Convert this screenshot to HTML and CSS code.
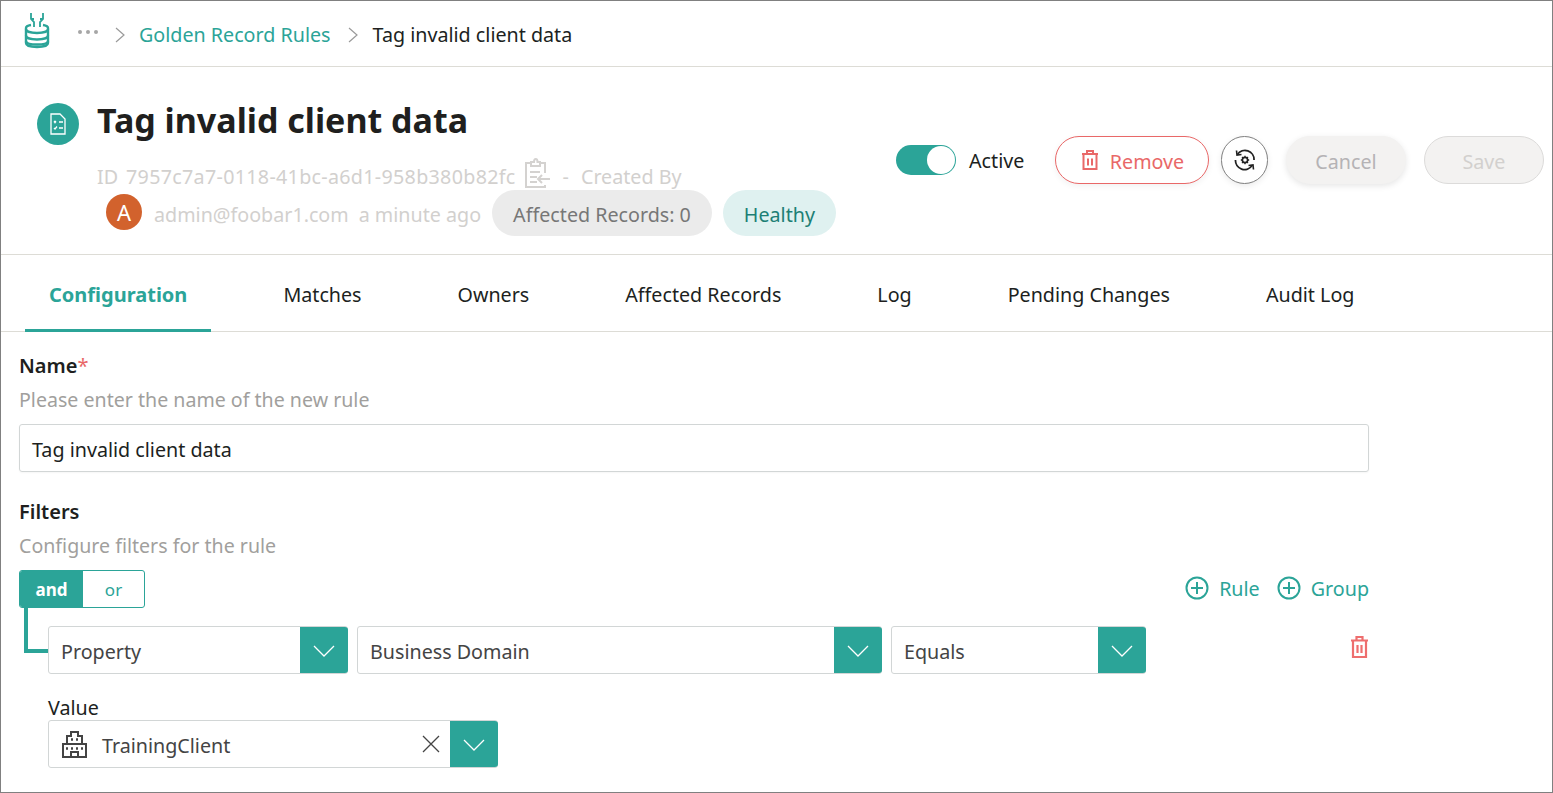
FILE: index.html

```html
<!DOCTYPE html>
<html lang="en">
<head>
    <meta charset="UTF-8">
    <title>Tag invalid client data</title>
    <link rel="stylesheet" href="styles.css">
</head>
<body>
    <div class="frame">
        <!-- breadcrumb -->
        <nav class="crumbs">
            <svg class="logo" width="28" height="38" viewBox="0 0 28 38" fill="none" stroke="#2ba498" stroke-width="2.4">
                <path d="M8 1v6l3 3v5M20 1v6l-3 3v5M8 7h3M17 7h3" stroke-width="1.800"/>
                <path d="M8 13c-3 .5-5 1.600-5 3v15c0 2.500 5 4 11 4s11-1.500 11-4V16c0-1.400-2-2.500-5-3"/>
                <path d="M3 17c0 2.500 5 4 11 4s11-1.500 11-4M3 23.500c0 2.500 5 4 11 4s11-1.500 11-4M3 29c0 2.500 5 3.500 11 3.500S25 31.500 25 29"/>
            </svg>
            <span class="dots">
                <i></i><i></i><i></i>
            </span>
            <svg class="sep" width="10" height="16" viewBox="0 0 10 16"><path d="M1 1l8 7-8 7" fill="none" stroke="#9a9a9a" stroke-width="1.200"/></svg>
            <a class="crumb-link">Golden Record Rules</a>
            <svg class="sep" width="10" height="16" viewBox="0 0 10 16"><path d="M1 1l8 7-8 7" fill="none" stroke="#9a9a9a" stroke-width="1.200"/></svg>
            <span class="crumb-current">Tag invalid client data</span>
        </nav>

        <!-- rule header -->
        <header class="rule-head">
            <div class="rule-icon">
                <svg width="18" height="22" viewBox="0 0 18 22" fill="none" stroke="#fff" stroke-width="1.300">
                    <path d="M2 1h9l5 5v15H2z"/>
                    <path d="M5 8l2 2M7 8l-2 2M10 9h4M5 15l1 1 2-2.500M10 15h4"/>
                </svg>
            </div>
            <div class="rule-info">
                <h1>Tag invalid client data</h1>
                <div class="meta-line">
                    <span>ID</span>
                    <span class="rule-id">7957c7a7-0118-41bc-a6d1-958b380b82fc</span>
                    <svg class="copy" width="27" height="32" viewBox="0 0 27 32" fill="none" stroke="#d4d2d0" stroke-width="2">
                        <path d="M7 6H2v24h19v-2M21 16V6h-5"/>
                        <path d="M7 9V5h3c0-4 3.500-4 3.500 0H16v4z"/>
                        <path d="M6 15h10M6 20h7M6 25h7M26 22H14M18 18l-4 4 4 4"/>
                    </svg>
                    <span class="dash">-</span>
                    <span>Created By</span>
                </div>
                <div class="meta-line second">
                    <span class="avatar">A</span>
                    <span class="nudge">admin@foobar1.com</span>
                    <span class="nudge">a minute ago</span>
                    <span class="pill grey">Affected Records: 0</span>
                    <span class="pill mint">Healthy</span>
                </div>
            </div>
            <div class="rule-actions">
                <span class="toggle"><i></i></span>
                <span class="toggle-label">Active</span>
                <button class="btn remove">
                    <svg width="16" height="20" viewBox="0 0 16 20" fill="none" stroke="#e96868" stroke-width="2">
                        <path d="M0 4h16M5 3V1h6v2M1.500 5v14h13V5M6 8.500v7M10 8.500v7"/>
                    </svg>
                    Remove
                </button>
                <button class="btn round">
                    <svg width="22" height="22" viewBox="0 0 22 22" fill="none" stroke="#222" stroke-width="1.800">
                        <path d="M3.500 5.500A9 9 0 0 1 20 11M1.500 11A9 9 0 0 0 18 16.500"/>
                        <path d="M2.500 1.500L3 6l4.500-.5M19.500 20.500L19 16l-4.500.5" stroke-width="1.600"/>
                        <circle cx="11" cy="11" r="2.600" stroke-width="1.600"/>
                        <path d="M11 6.800v1.600M11 13.600v1.600M6.800 11h1.600M13.600 11h1.600M8 8l1 1M13 13l1 1M14 8l-1 1M9 13l-1 1" stroke-width="1.300"/>
                    </svg>
                </button>
                <button class="btn cancel">Cancel</button>
                <button class="btn save">Save</button>
            </div>
        </header>

        <!-- tabs -->
        <div class="tabs">
            <a class="tab active">Configuration</a>
            <a class="tab">Matches</a>
            <a class="tab">Owners</a>
            <a class="tab">Affected Records</a>
            <a class="tab">Log</a>
            <a class="tab">Pending Changes</a>
            <a class="tab">Audit Log</a>
        </div>

        <!-- form -->
        <main class="form">
            <div class="field-title">Name<span class="req">*</span></div>
            <div class="field-help">Please enter the name of the new rule</div>
            <div class="text-input">Tag invalid client data</div>

            <div class="field-title filters">Filters</div>
            <div class="field-help">Configure filters for the rule</div>

            <div class="filter-top">
                <div class="and-or">
                    <span class="and">and</span>
                    <span class="or">or</span>
                </div>
                <div class="add-links">
                    <a class="add">
                        <svg width="24" height="24" viewBox="0 0 24 24" fill="none" stroke="#2ba498" stroke-width="2"><circle cx="12" cy="12" r="10.500"/><path d="M12 6v12M6 12h12"/></svg>
                        Rule
                    </a>
                    <a class="add">
                        <svg width="24" height="24" viewBox="0 0 24 24" fill="none" stroke="#2ba498" stroke-width="2"><circle cx="12" cy="12" r="10.500"/><path d="M12 6v12M6 12h12"/></svg>
                        Group
                    </a>
                </div>
            </div>

            <div class="filter-row">
                <span class="connector"></span>
                <div class="select w-property">
                    <span class="select-text">Property</span>
                    <span class="select-arrow"><svg width="22" height="12" viewBox="0 0 22 12"><path d="M1 1l10 10L21 1" fill="none" stroke="#fff" stroke-width="1.300"/></svg></span>
                </div>
                <div class="select w-domain">
                    <span class="select-text">Business Domain</span>
                    <span class="select-arrow"><svg width="22" height="12" viewBox="0 0 22 12"><path d="M1 1l10 10L21 1" fill="none" stroke="#fff" stroke-width="1.300"/></svg></span>
                </div>
                <div class="select w-equals">
                    <span class="select-text">Equals</span>
                    <span class="select-arrow"><svg width="22" height="12" viewBox="0 0 22 12"><path d="M1 1l10 10L21 1" fill="none" stroke="#fff" stroke-width="1.300"/></svg></span>
                </div>
                <svg class="row-trash" width="17" height="22" viewBox="0 0 17 22" fill="none" stroke="#ee6e6e" stroke-width="2.200">
                    <path d="M0 4.500h17M5.500 3.500V1h6v2.500M2 5v16h13V5M6.500 9v8M10.500 9v8"/>
                </svg>
            </div>

            <div class="value-block">
                <div class="value-label">Value</div>
                <div class="select w-value">
                    <svg class="org" width="27" height="27" viewBox="0 0 27 27" fill="none" stroke="#444" stroke-width="2">
                        <path d="M6 13V5h4V1h7v4h4v8M2 26V13h23v13zM10 26v-5h7v5"/>
                        <path d="M10 8.500h2M15 8.500h2M5 17.500h2M10 17.500h2M15 17.500h2M20 17.500h2" stroke-width="2.400"/>
                    </svg>
                    <span class="select-text">TrainingClient</span>
                    <svg class="clear" width="18" height="18" viewBox="0 0 18 18"><path d="M1 1l16 16M17 1L1 17" fill="none" stroke="#444" stroke-width="1.300"/></svg>
                    <span class="select-arrow"><svg width="22" height="12" viewBox="0 0 22 12"><path d="M1 1l10 10L21 1" fill="none" stroke="#fff" stroke-width="1.300"/></svg></span>
                </div>
            </div>
        </main>
    </div>
</body>
</html>
```

FILE: styles.css

```css
* {
    box-sizing: border-box;
}
html, body {
    margin: 0;
    padding: 0;
    height: 100%;
    overflow: hidden;
}
body {
    font-family: "Noto Sans", "Open Sans", sans-serif;
    font-size: 19.7px;
    color: #201f1e;
    background: #fff;
}
.frame {
    height: 793px;
    border: 1px solid #808080;
    overflow: hidden;
}

/* breadcrumb */
.crumbs {
    height: 66px;
    display: flex;
    align-items: center;
    padding-left: 22px;
    padding-top: 2px;
    border-bottom: 1px solid #dddcd6;
}
.logo {
    margin-bottom: 8px;
}
.dots {
    display: flex;
    gap: 4px;
    margin-left: 27px;
    margin-bottom: 6px;
}
.dots i {
    width: 4px;
    height: 4px;
    border-radius: 50%;
    background: #a6a6a6;
}
.crumbs .sep {
    margin-left: 17px;
}
.crumb-link {
    margin-left: 14px;
    color: #2ba498;
}
.crumb-current {
    margin-left: 15px;
}

/* rule header */
.rule-head {
    height: 188px;
    display: flex;
    padding: 36px 8px 0 36px;
    border-bottom: 1px solid #dddcd6;
}
.rule-icon {
    width: 42px;
    height: 42px;
    border-radius: 50%;
    background: #2ba498;
    display: flex;
    align-items: center;
    justify-content: center;
    flex: none;
}
.rule-info {
    margin-left: 18px;
}
h1 {
    margin: -6px 0 0;
    font-size: 34px;
    line-height: 46px;
    font-weight: 700;
    color: #201f1e;
}
.meta-line {
    display: flex;
    align-items: center;
    gap: 8px;
    color: #d2d0ce;
    margin-top: 17px;
    height: 32px;
}
.rule-id {
    letter-spacing: 0.3px;
}
.copy {
    margin-bottom: 6px;
}
.meta-line .dash {
    margin: 0 4px;
}
.meta-line.second {
    margin-top: -2px;
    height: 46px;
    padding-left: 9px;
    gap: 10px;
}
.nudge {
    padding-top: 2px;
}
.avatar {
    width: 36px;
    height: 36px;
    border-radius: 50%;
    background: #d2622d;
    color: #fff;
    display: flex;
    align-items: center;
    justify-content: center;
    font-size: 22px;
    margin-right: 2px;
    margin-top: -3px;
}
.pill {
    height: 46px;
    border-radius: 23px;
    margin-left: 1px;
    padding: 2px 21px 0;
    display: flex;
    align-items: center;
}
.pill.grey {
    background: #ebebeb;
    color: #777;
}
.pill.mint {
    background: #dff1f0;
    color: #1d7f75;
}
.rule-actions {
    margin-left: auto;
    display: flex;
    align-items: center;
    align-self: flex-start;
    margin-top: 33px;
}
.toggle {
    width: 60px;
    height: 30px;
    border-radius: 15px;
    background: #2ba498;
    position: relative;
    display: block;
}
.toggle i {
    position: absolute;
    right: 1px;
    top: 1px;
    width: 28px;
    height: 28px;
    border-radius: 50%;
    background: #fff;
}
.toggle-label {
    margin-left: 13px;
    width: 86px;
}
.btn {
    font-family: inherit;
    font-size: 19.7px;
    height: 48px;
    border-radius: 24px;
    background: #fff;
    padding: 2px 0 0;
    display: flex;
    align-items: center;
    justify-content: center;
}
.btn svg {
    margin-top: -2px;
}
.remove {
    width: 154px;
    border: 1px solid #e96868;
    color: #e96868;
    gap: 12px;
    padding-left: 2px;
    box-shadow: 0 2px 6px rgba(0, 0, 0, 0.06);
}
.round {
    width: 47px;
    margin-left: 12px;
    border: 1px solid #808080;
    box-shadow: 0 2px 6px rgba(0, 0, 0, 0.08);
}
.cancel {
    width: 120px;
    margin-left: 18px;
    background: #f3f2f1;
    border: 1px solid #f3f2f1;
    color: #b5b3b5;
    box-shadow: 0 2px 6px rgba(0, 0, 0, 0.1);
}
.save {
    width: 120px;
    margin-left: 18px;
    background: #f3f2f1;
    border: 1px solid #dcdbda;
    color: #d2d0ce;
}

/* tabs */
.tabs {
    height: 77px;
    display: flex;
    padding-left: 24px;
    border-bottom: 1px solid #dddcd6;
}
.tab {
    padding: 2px 24px 0;
    margin-right: 48px;
    display: flex;
    align-items: center;
}
.tab.active {
    font-size: 20px;
    color: #2ba498;
    font-weight: 700;
    border-bottom: 3px solid #2ba498;
    padding-top: 4px;
    margin-bottom: -1px;
}

/* form */
.form {
    padding: 18px 0 0 18px;
    width: 1368px;
}
.field-title {
    font-size: 20px;
    font-weight: 600;
    line-height: 32px;
    height: 32px;
}
.field-title.filters {
    margin-top: 24px;
}
.req {
    color: #e96868;
    font-weight: 400;
}
.field-help {
    font-size: 19.6px;
    color: #a19f9d;
    line-height: 36px;
    height: 36px;
}
.text-input {
    height: 48px;
    margin-top: 6px;
    border: 1px solid #d2d6d6;
    border-radius: 3px;
    padding: 2px 0 0 12px;
    display: flex;
    align-items: center;
    box-shadow: 0 1px 2px rgba(0, 0, 0, 0.04);
}
.filter-top {
    display: flex;
    justify-content: space-between;
    margin-top: 6px;
}
.and-or {
    display: flex;
    width: 126px;
    height: 38px;
    border: 1px solid #2ba498;
    border-radius: 3px;
    font-size: 17px;
    overflow: hidden;
}
.and {
    width: 63px;
    background: #2ba498;
    color: #fff;
    font-weight: 700;
    display: flex;
    align-items: center;
    justify-content: center;
}
.or {
    flex: 1;
    color: #2ba498;
    display: flex;
    align-items: center;
    justify-content: center;
}
.add-links {
    display: flex;
    gap: 17px;
    margin-top: -1px;
    height: 38px;
}
.add {
    display: flex;
    align-items: center;
    gap: 10px;
    color: #2ba498;
}
.filter-row {
    display: flex;
    align-items: center;
    gap: 9px;
    margin-top: 18px;
    padding-left: 29px;
    position: relative;
}
.connector {
    position: absolute;
    left: 5px;
    top: -18px;
    width: 24px;
    height: 45px;
    border-left: 4px solid #2ba498;
    border-bottom: 4px solid #2ba498;
}
.select {
    height: 48px;
    display: flex;
    align-items: center;
    border: 1px solid #d2d6d6;
    border-radius: 3px;
    padding-left: 12px;
    color: #444;
}
.select-text {
    flex: 1;
    padding-top: 2px;
}
.select-arrow {
    width: 48px;
    height: 46px;
    margin-right: -1px;
    background: #2ba498;
    display: flex;
    align-items: center;
    justify-content: center;
    border-radius: 0 3px 3px 0;
}
.select-arrow svg {
    margin-top: 2px;
}
.w-property {
    width: 300px;
}
.w-domain {
    width: 525px;
}
.w-equals {
    width: 255px;
}
.row-trash {
    margin-left: auto;
    margin-right: 1px;
    margin-bottom: 6px;
}
.value-block {
    padding-left: 29px;
    margin-top: 20px;
}
.value-label {
    line-height: 28px;
    height: 28px;
}
.w-value {
    width: 450px;
    margin-top: -2px;
}
.org {
    margin-right: 14px;
}
.clear {
    margin-right: 10px;
}
```
